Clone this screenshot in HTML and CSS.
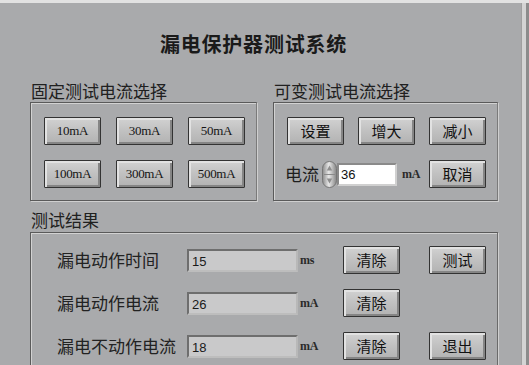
FILE: index.html
```html
<!DOCTYPE html>
<html lang="zh-CN">
<head>
<meta charset="utf-8">
<title>漏电保护器测试系统</title>
<link rel="stylesheet" href="styles.css">
</head>
<body>
<div class="window">
  <h1 class="title">漏电保护器测试系统</h1>
  <div class="top-row">
    <section class="group group-fixed">
      <div class="group-label">固定测试电流选择</div>
      <div class="box fixed-grid">
        <button class="btn btn-ma">10mA</button>
        <button class="btn btn-ma">30mA</button>
        <button class="btn btn-ma">50mA</button>
        <button class="btn btn-ma">100mA</button>
        <button class="btn btn-ma">300mA</button>
        <button class="btn btn-ma">500mA</button>
      </div>
    </section>
    <section class="group group-var">
      <div class="group-label">可变测试电流选择</div>
      <div class="box var-grid">
        <button class="btn">设置</button>
        <button class="btn">增大</button>
        <button class="btn">减小</button>
        <div class="current-row">
          <span class="cur-label">电流</span>
          <span class="spinner">
            <svg width="15" height="27" viewBox="0 0 15 27">
              <defs>
                <linearGradient id="sg" x1="0" y1="0" x2="1" y2="0">
                  <stop offset="0" stop-color="#8a8a8a"/>
                  <stop offset="0.45" stop-color="#e8e8e8"/>
                  <stop offset="1" stop-color="#858585"/>
                </linearGradient>
              </defs>
              <rect x="0.5" y="0.5" width="14" height="26" rx="7" fill="url(#sg)" stroke="#767676"/>
              <line x1="2" y1="13.5" x2="13" y2="13.5" stroke="#8a8a8a"/>
              <path d="M7.5 4.5 L4.8 9.5 L10.2 9.5 Z" fill="#8e8e8e"/>
              <path d="M7.5 22.5 L4.8 17.5 L10.2 17.5 Z" fill="#8e8e8e"/>
            </svg>
          </span>
          <span class="cur-input">36</span>
          <span class="unit">mA</span>
        </div>
        <button class="btn">取消</button>
      </div>
    </section>
  </div>
  <section class="group group-result">
    <div class="group-label">测试结果</div>
    <div class="box result-grid">
      <span class="row-label">漏电动作时间</span>
      <span class="field">15</span>
      <span class="unit">ms</span>
      <button class="btn">清除</button>
      <button class="btn btn-last">测试</button>

      <span class="row-label">漏电动作电流</span>
      <span class="field">26</span>
      <span class="unit">mA</span>
      <button class="btn">清除</button>
      <span></span>

      <span class="row-label">漏电不动作电流</span>
      <span class="field">18</span>
      <span class="unit">mA</span>
      <button class="btn">清除</button>
      <button class="btn btn-last">退出</button>
    </div>
  </section>
</div>
</body>
</html>
```

FILE: styles.css
```css
html, body {
  margin: 0;
  padding: 0;
  background: #a9aaac;
}

.window {
  box-sizing: border-box;
  width: 529px;
  height: 365px;
  overflow: hidden;
  background: #a9aaac;
  border-top: 3px solid #e2e2e2;
  padding-left: 30px;
  box-shadow: inset -3px 0 0 #8c8c8c, inset -7px 0 0 #d4d4d4, inset -8px 0 0 #a0a0a0;
  font-family: "Noto Sans CJK SC", "Noto Sans", sans-serif;
  color: #1e1e1e;
}

.title {
  margin: 0;
  padding-top: 29px;
  padding-right: 52px;
  height: 24px;
  line-height: 24px;
  font-size: 20px;
  font-weight: bold;
  text-align: center;
  letter-spacing: 0.8px;
  color: #1a1a1a;
}

.top-row {
  display: flex;
  gap: 16px;
  margin-top: 25px;
}

.group-label {
  font-size: 17px;
  line-height: 20px;
  height: 20px;
  color: #202020;
  margin-bottom: 1px;
  margin-left: 1px;
}

.group-fixed { width: 227px; }
.group-var { width: 225px; }

.box {
  box-sizing: border-box;
  border: 1px solid #5a5a5a;
  border-right-color: #7a7a7a;
  box-shadow: inset 1px 1px 0 #d2d2d2, 1px 1px 0 #cfcfcf;
}

.fixed-grid, .var-grid {
  height: 99px;
  display: grid;
  grid-template-columns: repeat(3, 57px);
  grid-auto-rows: 28px;
  column-gap: 15px;
  row-gap: 15px;
  padding: 14px 0 0 13px;
}

.var-grid {
  column-gap: 14px;
}

.btn {
  box-sizing: border-box;
  width: 57px;
  height: 28px;
  margin: 0;
  padding: 0;
  border: 1px solid #333333;
  border-radius: 1px;
  background: linear-gradient(180deg, #d2d2d2 0%, #c2c2c2 45%, #b2b2b2 100%);
  box-shadow: inset 2px 2px 0 #e2e2e2, inset -2px -2px 0 #858585;
  font-family: "Noto Sans CJK SC", sans-serif;
  font-size: 15px;
  line-height: 26px;
  color: #111;
  text-align: center;
}

.btn-ma {
  font-family: "Liberation Serif", serif;
  font-size: 13px;
  letter-spacing: -0.3px;
  color: #151515;
}

.current-row {
  grid-column: span 2;
  display: flex;
  align-items: center;
  margin-left: -2px;
  white-space: nowrap;
}

.current-row > * {
  flex: none;
}

.cur-label {
  font-size: 17px;
  line-height: 20px;
  width: 37px;
}

.spinner {
  display: flex;
  width: 15px;
  height: 27px;
}

.cur-input {
  box-sizing: border-box;
  width: 60px;
  height: 23px;
  background: #ffffff;
  border: 2px solid #8a8a8a;
  border-right-color: #d0d0d0;
  border-bottom-color: #d0d0d0;
  font-family: "Liberation Sans", sans-serif;
  font-size: 13px;
  line-height: 19px;
  padding-left: 2px;
  color: #111;
}

.unit {
  font-family: "Liberation Serif", serif;
  font-weight: bold;
  font-size: 12px;
  color: #2a2a2a;
  letter-spacing: -0.3px;
}

.current-row .unit {
  margin-left: 5px;
}

.group-result {
  margin-top: 9px;
}

.group-result .group-label {
  margin-bottom: 2px;
}

.result-grid {
  height: 200px;
  width: 468px;
  border-right-color: #6a6a6a;
  display: grid;
  grid-template-columns: 130px 111px 45px 57px 57px;
  column-gap: 0;
  grid-auto-rows: 28px;
  row-gap: 15px;
  padding: 13px 0 0 26px;
  align-items: center;
}

.result-grid .btn-last {
  margin-left: 29px;
}

.result-grid .btn {
  align-self: stretch;
}

.row-label {
  font-size: 17px;
  line-height: 20px;
  color: #222;
  white-space: nowrap;
}

.field {
  box-sizing: border-box;
  height: 23px;
  width: 111px;
  background: #c9c9ca;
  border: 2px solid #6e6e6e;
  border-right-color: #b8b8b8;
  border-bottom-color: #bdbdbd;
  font-family: "Liberation Sans", sans-serif;
  font-size: 13px;
  line-height: 21px;
  padding-left: 3px;
  color: #1a1a1a;
}

.result-grid .unit {
  padding-left: 2px;
}
```
